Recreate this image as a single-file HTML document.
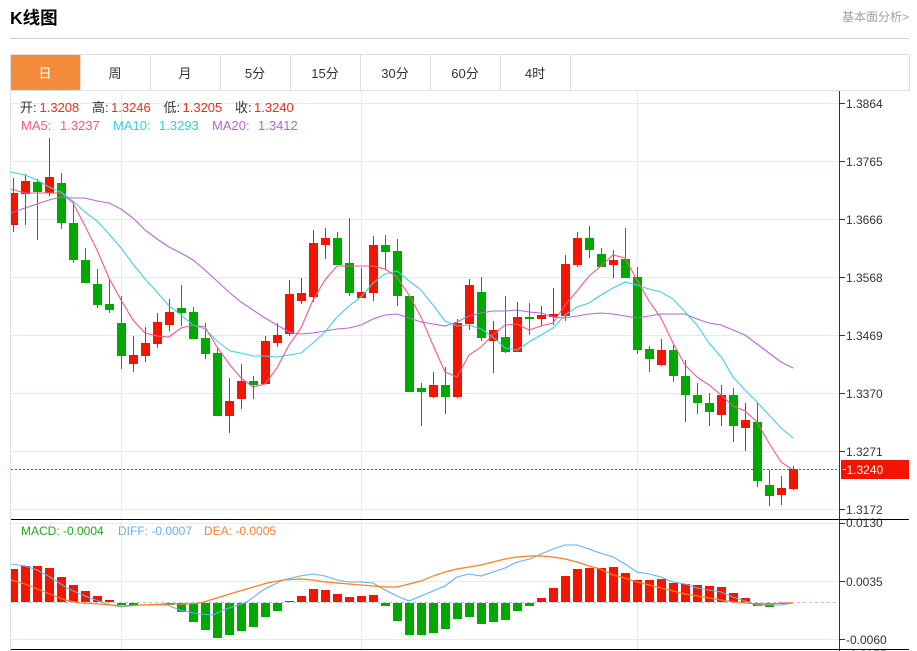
<!DOCTYPE html>
<html><head><meta charset="utf-8"><title>K线图</title>
<style>
html,body{margin:0;padding:0;background:#fff;width:917px;height:651px;overflow:hidden}
svg{display:block}
text{font-family:"Liberation Sans","Noto Sans CJK SC",sans-serif;font-size:13px}
.s text,text.s{font-size:12px}
</style></head><body>
<svg width="917" height="651" viewBox="0 0 917 651" xmlns="http://www.w3.org/2000/svg">
<rect width="917" height="651" fill="#fff"/>
<text x="10" y="24" style="font-size:17.5px;font-weight:bold" fill="#000">K线图</text>
<text x="842" y="21" style="font-size:12px" fill="#a0a0a0">基本面分析&gt;</text>
<rect x="10" y="38" width="899" height="1" fill="#cfcfcf"/>
<!-- toolbar -->
<path d="M10 54.5H909.5V90.5H10" fill="none" stroke="#dedede"/>
<path d="M10.5 54V651" stroke="#dedede"/>
<rect x="11" y="55" width="69" height="35" rx="1" fill="#f38b3d"/>
<path d="M80.5 55V90M150.5 55V90M220.5 55V90M290.5 55V90M360.5 55V90M430.5 55V90M500.5 55V90M570.5 55V90" stroke="#dedede"/>
<g text-anchor="middle" fill="#333">
<text x="45" y="78" fill="#fff">日</text>
<text x="115" y="78">周</text>
<text x="185" y="78">月</text>
<text x="255" y="78">5分</text>
<text x="325" y="78">15分</text>
<text x="395" y="78">30分</text>
<text x="465" y="78">60分</text>
<text x="535" y="78">4时</text>
</g>
<!-- grid -->
<path d="M11 103.5H839M11 161.5H839M11 219.5H839M11 277.5H839M11 335.5H839M11 393.5H839M11 451.5H839M11 509.5H839M11 523.5H839M11 581.5H839M11 639.5H839M121.5 91V651M361.5 91V651M637.5 91V651" stroke="#e5ecf1" fill="none"/>
<!-- wicks -->
<path fill="none" stroke="#e31c14" d="M13.5 178V232M25.5 174V225M49.5 138V196M133.5 336V372M145.5 327V362M157.5 313V348M169.5 299V331M229.5 378V433M241.5 364V409M265.5 336V384M277.5 323V347M289.5 280V336M301.5 278V304M313.5 230V302M325.5 228V259M361.5 268V298M373.5 236V301M433.5 372V398M457.5 319V398M469.5 279V330M493.5 321V373M517.5 302V352M541.5 306V326M553.5 288V325M565.5 255V321M577.5 232V267M613.5 250V278M661.5 339V366M721.5 385V426M745.5 403V451M781.5 476V505M793.5 466V490"/>
<path fill="none" stroke="#0f960f" d="M37.5 179V240M61.5 173V229M73.5 202V263M85.5 248V283M97.5 269V308M109.5 279V313M121.5 296V369M181.5 285V326M193.5 307V339M205.5 323V359M217.5 347V416M253.5 376V399M337.5 232V265M349.5 218V296M385.5 235V269M397.5 239V306M421.5 383V426M445.5 367V414M481.5 277V341M505.5 296V353M529.5 303V335M589.5 226V258M601.5 248V267M625.5 228V278M637.5 267V354M649.5 346V372M673.5 345V382M685.5 360V422M697.5 383V414M709.5 393V426M733.5 388V442M757.5 402V487M769.5 470V506"/>
<!-- bodies -->
<path fill="#f41500" d="M11 193h7v32h-7zM21 181h9v13h-9zM45 177h9v16h-9zM129 355h9v9h-9zM141 343h9v13h-9zM153 322h9v22h-9zM165 312h9v13h-9zM225 401h9v15h-9zM237 381h9v18h-9zM261 341h9v43h-9zM273 335h9v8h-9zM285 294h9v40h-9zM297 293h9v8h-9zM309 243h9v54h-9zM321 238h9v7h-9zM357 292h9v6h-9zM369 245h9v48h-9zM429 385h9v12h-9zM453 323h9v74h-9zM465 285h9v39h-9zM489 330h9v11h-9zM513 317h9v35h-9zM537 315h9v4h-9zM549 314h9v3h-9zM561 264h9v52h-9zM573 238h9v27h-9zM609 260h9v5h-9zM657 350h9v15h-9zM717 395h9v20h-9zM741 420h9v8h-9zM777 488h9v7h-9zM789 469h9v20h-9z"/>
<path fill="#00a800" d="M33 182h9v10h-9zM57 183h9v40h-9zM69 223h9v37h-9zM81 260h9v23h-9zM93 284h9v21h-9zM105 304h9v6h-9zM117 323h9v33h-9zM177 308h9v5h-9zM189 312h9v27h-9zM201 338h9v16h-9zM213 353h9v63h-9zM249 381h9v4h-9zM333 238h9v27h-9zM345 263h9v30h-9zM381 245h9v7h-9zM393 251h9v45h-9zM405 296h9v96h-9zM417 388h9v4h-9zM441 385h9v12h-9zM477 292h9v46h-9zM501 337h9v15h-9zM525 317h9v2h-9zM585 238h9v12h-9zM597 254h9v13h-9zM621 259h9v19h-9zM633 277h9v73h-9zM645 349h9v10h-9zM669 350h9v26h-9zM681 376h9v19h-9zM693 395h9v8h-9zM705 403h9v9h-9zM729 395h9v31h-9zM753 422h9v59h-9zM765 485h9v11h-9z"/>
<!-- MA lines -->
<polyline fill="none" stroke="#b768d0" stroke-width="1.1" points="11,213 25,208 37,204 49,200 61,197 73,198 85,198 97,201 109,203 121,209 133,218 145,230 157,239 169,247 181,253 193,260 205,270 217,281 230,293 241,302 253,310 265,318 277,325 289,332 301,334 313,333 325,331 337,329 349,328 361,325 373,319 385,315 397,314 409,318 421,322 433,324 445,326 457,322 469,316 481,313 493,311 505,311 517,310 529,312 541,313 553,317 565,318 577,316 589,314 601,313 613,314 625,316 637,318 649,316 661,314 673,314 685,314 697,319 709,323 721,325 733,330 745,335 757,344 769,353 781,362 793,368"/>
<polyline fill="none" stroke="#3fd0e2" stroke-width="1.1" points="11,172 25,175 37,180 49,187 61,192 73,201 85,212 97,221 109,234 121,248 133,264 145,279 157,292 169,306 181,315 193,325 205,329 217,341 230,351 241,353 253,356 265,356 277,357 289,355 301,353 313,343 325,332 337,317 349,306 361,297 373,283 385,274 397,271 409,281 421,290 433,305 445,321 457,326 469,325 481,329 493,337 505,348 517,350 529,342 541,335 553,328 565,315 577,307 589,303 601,295 613,288 625,282 637,285 649,289 661,292 673,299 685,312 697,325 709,343 722,358 733,377 745,390 757,402 769,415 781,428 793,438"/>
<polyline fill="none" stroke="#f4588a" stroke-width="1.1" points="11,189 25,193 37,193 49,193 61,193 73,203 85,226 97,250 109,278 121,300 133,320 145,333 157,336 169,337 181,328 193,325 205,327 217,347 230,365 241,378 253,387 265,384 277,368 289,345 301,328 313,300 325,280 337,266 349,266 361,266 373,266 385,269 397,277 409,295 421,317 433,345 445,372 457,377 469,355 481,347 493,335 505,325 517,324 529,330 541,326 553,323 565,305 577,291 589,276 601,266 613,255 625,258 637,280 649,301 661,318 673,343 685,365 697,377 709,385 721,395 733,406 745,411 757,422 769,443 781,462 793,470"/>
<!-- price line -->
<path d="M11 469.5H839" stroke="#ee2a22" stroke-dasharray="2 2" fill="none"/>
<!-- MACD bars -->
<path fill="#f41500" d="M11 569h7v33h-7zM21 566h9v36h-9zM33 566h9v36h-9zM45 568h9v34h-9zM57 577h9v25h-9zM69 585h9v17h-9zM81 591h9v11h-9zM93 596h9v6h-9zM105 600h9v2h-9zM285 601h9v1h-9zM297 596h9v6h-9zM309 589h9v13h-9zM321 590h9v12h-9zM333 594h9v8h-9zM345 597h9v5h-9zM357 596h9v6h-9zM369 595h9v7h-9zM537 598h9v4h-9zM549 588h9v14h-9zM561 576h9v26h-9zM573 569h9v33h-9zM585 568h9v34h-9zM597 568h9v34h-9zM609 567h9v35h-9zM621 573h9v29h-9zM633 580h9v22h-9zM645 580h9v22h-9zM657 579h9v23h-9zM669 583h9v19h-9zM681 584h9v18h-9zM693 585h9v17h-9zM705 586h9v16h-9zM717 587h9v15h-9zM729 593h9v9h-9zM741 598h9v4h-9z"/>
<path fill="#00a800" d="M117 603h9v2h-9zM129 603h9v2h-9zM165 603h9v2h-9zM177 603h9v9h-9zM189 603h9v19h-9zM201 603h9v27h-9zM213 603h9v35h-9zM225 603h9v32h-9zM237 603h9v28h-9zM249 603h9v24h-9zM261 603h9v14h-9zM273 603h9v8h-9zM381 603h9v3h-9zM393 603h9v18h-9zM405 603h9v32h-9zM417 603h9v32h-9zM429 603h9v30h-9zM441 603h9v26h-9zM453 603h9v16h-9zM465 603h9v14h-9zM477 603h9v21h-9zM489 603h9v19h-9zM501 603h9v17h-9zM513 603h9v8h-9zM525 603h9v3h-9zM753 603h9v3h-9zM765 603h9v4h-9zM777 603h9v1h-9z"/>
<path d="M11 602.5H839" stroke="#9ccbe2" stroke-dasharray="3 3" fill="none"/>
<polyline fill="none" stroke="#5fb2f2" stroke-width="1.1" points="11,564 25,566 37,570 50,577 67,588 80,594 93,599 107,604 121,607 140,605 167,605 180,610 193,613 213,615 223,610 247,602 263,590 283,580 300,576 313,574 325,576 337,580 349,582 361,582 373,583 385,590 397,596 409,601 421,596 433,591 445,586 457,577 469,574 481,576 493,572 505,568 517,562 530,559 541,554 553,549 565,545 577,545 589,549 600,553 613,557 625,564 637,572 649,574 661,577 673,582 685,584 697,588 709,590 721,592 733,597 745,601 757,605 769,605 781,605 793,603"/>
<polyline fill="none" stroke="#ff7e22" stroke-width="1.2" points="11,580 25,584 37,589 50,594 65,600 80,603 100,604 121,606 140,605 167,604 187,604 200,603 217,598 233,593 250,588 267,583 283,580 300,579 313,580 325,582 337,583 349,584 361,585 373,586 385,587 397,587 409,584 421,581 433,576 445,572 457,569 469,567 481,565 493,562 505,559 517,557 530,556 541,556 553,557 565,559 577,562 589,566 600,569 613,575 625,578 637,582 649,585 661,588 673,591 685,594 697,596 709,598 721,600 733,602 745,603 757,604 769,604 781,603 793,603"/>
<!-- axis -->
<path d="M839.5 91V651" stroke="#333"/>
<path d="M840 103.5h5M840 161.5h5M840 219.5h5M840 277.5h5M840 335.5h5M840 393.5h5M840 451.5h5M840 509.5h5M840 523.5h5M840 581.5h5M840 639.5h5" stroke="#333"/>
<g class="s" fill="#333">
<text x="846" y="108">1.3864</text>
<text x="846" y="166">1.3765</text>
<text x="846" y="224">1.3666</text>
<text x="846" y="282">1.3568</text>
<text x="846" y="340">1.3469</text>
<text x="846" y="398">1.3370</text>
<text x="846" y="456">1.3271</text>
<text x="846" y="514">1.3172</text>
<text x="846" y="527">0.0130</text>
<text x="846" y="586">0.0035</text>
<text x="846" y="644">-0.0060</text>
<text x="846" y="659">-0.0155</text>
</g>
<path d="M11 519.5H909M11 649.5H909" stroke="#000"/>
<rect x="841" y="460" width="68" height="19" fill="#f41500"/>
<path d="M843 469.5h3" stroke="#fff"/>
<text class="s" x="846.5" y="474" fill="#fff">1.3240</text>
<!-- info -->
<g>
<text x="20" y="112" fill="#333">开:</text><text x="39.5" y="112" fill="#f5281e">1.3208</text>
<text x="92" y="112" fill="#333">高:</text><text x="111" y="112" fill="#f5281e">1.3246</text>
<text x="163.5" y="112" fill="#333">低:</text><text x="182.5" y="112" fill="#f5281e">1.3205</text>
<text x="235" y="112" fill="#333">收:</text><text x="254" y="112" fill="#f5281e">1.3240</text>
<text x="21" y="130" fill="#f4588a">MA5:</text><text x="60" y="130" fill="#f4588a">1.3237</text>
<text x="113" y="130" fill="#34cfe0">MA10:</text><text x="159" y="130" fill="#34cfe0">1.3293</text>
<text x="212" y="130" fill="#b565cf">MA20:</text><text x="258" y="130" fill="#b565cf">1.3412</text>
</g>
<g class="s">
<text x="21" y="535" fill="#1fa81f">MACD: -0.0004</text>
<text x="118" y="535" fill="#5fb2f2">DIFF: -0.0007</text>
<text x="204" y="535" fill="#ff7e30">DEA: -0.0005</text>
</g>
</svg>
</body></html>
